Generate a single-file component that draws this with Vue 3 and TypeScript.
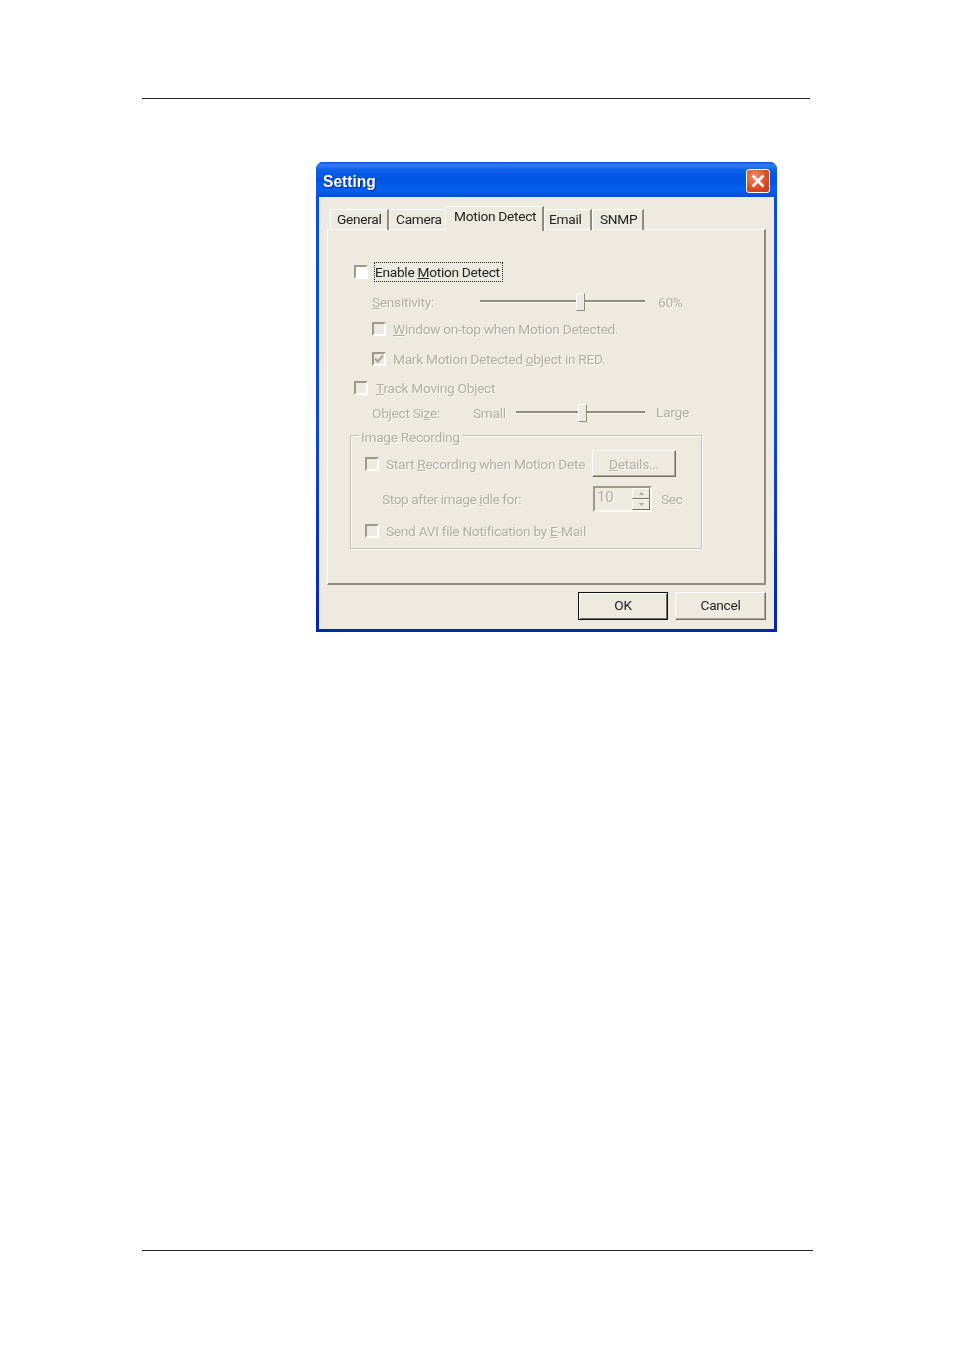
<script setup lang="ts">
const tabs = [
  { label: 'General', width: 59, pad: 6, active: false },
  { label: 'Camera', width: 58, pad: 6, active: false },
  { label: 'Motion Detect', width: 99, pad: 8, active: true },
  { label: 'Email', width: 48, pad: 4, active: false },
  { label: 'SNMP', width: 52, pad: 7, active: false },
]
</script>

<template>
  <div class="page">
    <div class="rule-top"></div>
    <section class="dialog">
      <header class="titlebar">
        <span class="title">Setting</span>
        <span class="close">
          <svg width="16" height="16" viewBox="0 0 16 16"><path d="M2.5 2.5 13.5 13.5M13.5 2.5 2.5 13.5" stroke="#fff" stroke-width="2.6" fill="none" /></svg>
        </span>
      </header>
      <div class="client">
        <nav class="tabs">
          <div
            v-for="t in tabs"
            :key="t.label"
            class="tab"
            :class="{ active: t.active }"
            :style="{ width: t.width + 'px', paddingLeft: t.pad + 'px' }"
          >{{ t.label }}</div>
        </nav>
        <div class="panel">
          <div class="row r1">
            <span class="box white"></span>
            <span class="focus">Enable <u>M</u>otion Detect</span>
          </div>
          <div class="row r2 indent off">
            <span class="lbl-sens"><u>S</u>ensitivity:</span>
            <span class="slider w165"><i class="thumb t100"></i></span>
            <span class="val">60%</span>
          </div>
          <div class="row r3 indent off">
            <span class="box"></span>
            <span class="txt"><u>W</u>indow on-top when Motion Detected.</span>
          </div>
          <div class="row r4 indent off">
            <span class="box">
              <svg width="10" height="10" viewBox="0 0 10 10"><path d="M1 4.5 3.8 7.5 9 1.5" stroke="#aca899" stroke-width="2.2" fill="none" /></svg>
            </span>
            <span class="txt">Mark Motion Detected <u>o</u>bject in RED.</span>
          </div>
          <div class="row r5 off">
            <span class="box"></span>
            <span class="txt track"><u>T</u>rack Moving Object</span>
          </div>
          <div class="row r6 indent off">
            <span class="lbl-size">Object Si<u>z</u>e:</span>
            <span class="lbl-small">Small</span>
            <span class="slider w129"><i class="thumb t62"></i></span>
            <span class="val large">Large</span>
          </div>
          <fieldset class="group off">
            <legend class="legend">Image Recording</legend>
            <div class="grow g1">
              <span class="box"></span>
              <span class="txt clip">Start <u>R</u>ecording when Motion Dete</span>
              <span class="btn details"><span><u>D</u>etails...</span></span>
            </div>
            <div class="grow g2">
              <span class="stop">Stop after image <u>i</u>dle for:</span>
              <span class="spin">
                <span class="edit">10</span>
                <span class="arrows">
                  <span class="arrow"><svg width="5" height="3" viewBox="0 0 5 3"><path d="M2.5 0 5 3H0z" fill="#aca899" /></svg></span>
                  <span class="arrow"><svg width="5" height="3" viewBox="0 0 5 3"><path d="M0 0H5L2.5 3z" fill="#aca899" /></svg></span>
                </span>
              </span>
              <span class="sec">Sec</span>
            </div>
            <div class="grow g3">
              <span class="box"></span>
              <span class="txt">Send AVI file Notification by <u>E</u>-Mail</span>
            </div>
          </fieldset>
        </div>
        <footer class="footer">
          <span class="btn ok"><span>OK</span></span>
          <span class="btn cancel"><span>Cancel</span></span>
        </footer>
      </div>
    </section>
    <div class="rule-bottom"></div>
  </div>
</template>

<style>
html, body { margin: 0; background: #fff; }
</style>

<style scoped>
.page {
  width: 954px;
  height: 1351px;
  display: flex;
  flex-direction: column;
  font-family: Roboto, "Liberation Sans", Arial, sans-serif;
  font-size: 13.7px;
  letter-spacing: -0.28px;
  color: #222;
  overflow: hidden;
  box-sizing: border-box;
  padding-top: 98px;
}
.rule-top { width: 668px; height: 1px; background: #222; margin-left: 142px; }
.rule-bottom { width: 671px; height: 1px; background: #222; margin: 618px 0 0 142px; }

.dialog {
  width: 461px;
  height: 470px;
  margin: 63px 0 0 316px;
  display: flex;
  flex-direction: column;
  box-sizing: border-box;
  border-radius: 7px 7px 0 0;
  overflow: hidden;
  flex: none;
  background: linear-gradient(#0a4fe0, #0a45d8 60%, #0025b0);
  filter: blur(0.35px);
}
.titlebar {
  height: 35px;
  flex: none;
  display: flex;
  align-items: center;
  justify-content: space-between;
  padding: 3px 7px 0 7px;
  box-sizing: border-box;
  background: linear-gradient(#0a4fd8 0, #2c82f2 3px, #0c5fe8 8px, #0054e3 50%, #0660f0 80%, #0a4bd0 100%);
}
.title {
  color: #fff;
  font-family: "Liberation Sans", Arial, sans-serif;
  font-weight: 700;
  font-size: 15.6px;
  letter-spacing: 0;
  padding-top: 2px;
  text-shadow: 1px 1px 1px #0a2a90;
}
.close {
  width: 24px;
  height: 24px;
  box-sizing: border-box;
  border: 1px solid #fff;
  border-radius: 3px;
  background: radial-gradient(circle at 35% 30%, #ee8a68, #dc4a25 60%, #c03a18);
  display: flex;
  align-items: center;
  justify-content: center;
}
.client {
  flex: 1;
  margin: 0 3px 3px 3px;
  background: #edeadf;
  display: flex;
  flex-direction: column;
  padding: 9px 8px 0 8px;
  min-height: 0;
}
.tabs {
  display: flex;
  align-items: flex-end;
  height: 24px;
  padding-left: 3px;
  position: relative;
  z-index: 1;
  flex: none;
}
.tab {
  height: 21px;
  box-sizing: border-box;
  padding-top: 1px;
  border-top: 1px solid #fff;
  border-left: 1px solid #fff;
  border-right: 2px solid #8f8c7d;
  white-space: nowrap;
  flex: none;
  border-top-left-radius: 2px;
}
.tab.active {
  height: 25px;
  margin-left: -2px;
  margin-bottom: -1px;
  background: #edeadf;
  padding-top: 1px;
  padding-bottom: 3px;
  position: relative;
}
.panel {
  width: 439px;
  height: 356px;
  box-sizing: border-box;
  flex: none;
  border-top: 1px solid #fff;
  border-left: 1px solid #fff;
  border-right: 2px solid #8f8c7d;
  border-bottom: 2px solid #8f8c7d;
  padding: 27px 0 0 26px;
  margin-top: -1px;
}
.row { display: flex; align-items: center; }
.r1 { height: 30px; }
.r2 { height: 30px; }
.r3 { height: 24px; }
.r4 { height: 36px; }
.r5 { height: 22px; }
.r6 { height: 28px; }
.indent { margin-left: 18px; }

.off { color: #b1aea0; text-shadow: 1px 1px 0 #fbfaf4; }
u { text-underline-offset: 1px; }

.box {
  width: 14px;
  height: 14px;
  box-sizing: border-box;
  border: 2px solid;
  border-color: #9d9a8a #fff #fff #9d9a8a;
  flex: none;
  display: flex;
  align-items: center;
  justify-content: center;
  background: #edeadf;
}
.box.white { background: #fff; }
.box svg { flex: none; }
.focus {
  margin-left: 7px;
  padding: 1px 0;
  height: 18px;
  line-height: 16px;
  width: 127px;
  box-sizing: border-box;
  outline: 1px dotted #222;
  outline-offset: 0;
  white-space: nowrap;
}
.txt { margin-left: 7px; white-space: nowrap; }
.txt.track { margin-left: 8px; }
.lbl-sens { width: 108px; flex: none; }
.lbl-size { width: 101px; flex: none; }
.lbl-small { width: 43px; flex: none; }
.slider {
  display: block;
  height: 3px;
  margin-bottom: 2px;
  box-sizing: border-box;
  background: #8f8c7d;
  border-bottom: 1px solid #fff;
  position: relative;
  flex: none;
}
.w165 { width: 165px; }
.w129 { width: 129px; }
.thumb {
  position: absolute;
  top: -7px;
  width: 9px;
  height: 18px;
  box-sizing: border-box;
  background: #edeadf;
  border: 1px solid;
  border-color: #fff #8f8c7d #8f8c7d #fff;
}
.t100 { left: 96px; }
.t62 { left: 62px; }
.val { margin-left: 13px; }
.val.large { margin-left: 11px; margin-bottom: 2px; }

.group {
  position: relative;
  width: 352px;
  height: 114px;
  margin: 8px 0 0 -4px;
  padding: 0 0 0 14px;
  box-sizing: border-box;
  border: 1px solid #c5c2b2;
  box-shadow: 1px 1px 0 #fff, inset 1px 1px 0 #fff;
  display: block;
  min-width: 0;
}
.legend {
  position: absolute;
  top: -7px;
  left: 8px;
  padding: 0 2px;
  background: #edeadf;
  line-height: 16px;
}
.grow { display: flex; align-items: center; }
.g1 { height: 27px; margin-top: 14px; }
.g2 { height: 26px; margin-top: 9px; }
.g3 { height: 22px; margin-top: 8px; }
.clip { width: 199px; flex: none; }
.btn {
  display: flex;
  align-items: center;
  justify-content: center;
  box-sizing: border-box;
  flex: none;
  background: #edeadf;
  border: 1px solid;
  border-color: #fff #716f64 #716f64 #fff;
  box-shadow: inset -1px -1px 0 #aca899;
}
.details { width: 84px; height: 27px; margin-left: 7px; }
.stop { width: 211px; margin-left: 17px; flex: none; letter-spacing: -0.42px; }
.spin {
  width: 59px;
  height: 26px;
  box-sizing: border-box;
  flex: none;
  display: flex;
  background: #edeadf;
  border: 2px solid;
  border-color: #9d9a8a #fbfaf4 #fbfaf4 #9d9a8a;
}
.edit { flex: 1; padding-left: 2px; line-height: 19px; font-size: 15px; }
.arrows { width: 18px; display: flex; flex-direction: column; flex: none; }
.arrow {
  flex: 1;
  display: flex;
  align-items: center;
  justify-content: center;
  border: 1px solid;
  border-color: #fff #716f64 #716f64 #fff;
  background: #edeadf;
}
.sec { margin-left: 9px; }

.footer {
  flex: 1;
  display: flex;
  gap: 7px;
  padding-top: 7px;
  justify-content: flex-end;
  align-items: flex-start;
}
.ok, .cancel { height: 28px; }
.ok span, .cancel span { position: relative; top: -1px; }
.ok { width: 90px; border: 1px solid #111; box-shadow: inset 1px 1px 0 #fff, inset -1px -1px 0 #716f64; }
.cancel { width: 91px; }
</style>
